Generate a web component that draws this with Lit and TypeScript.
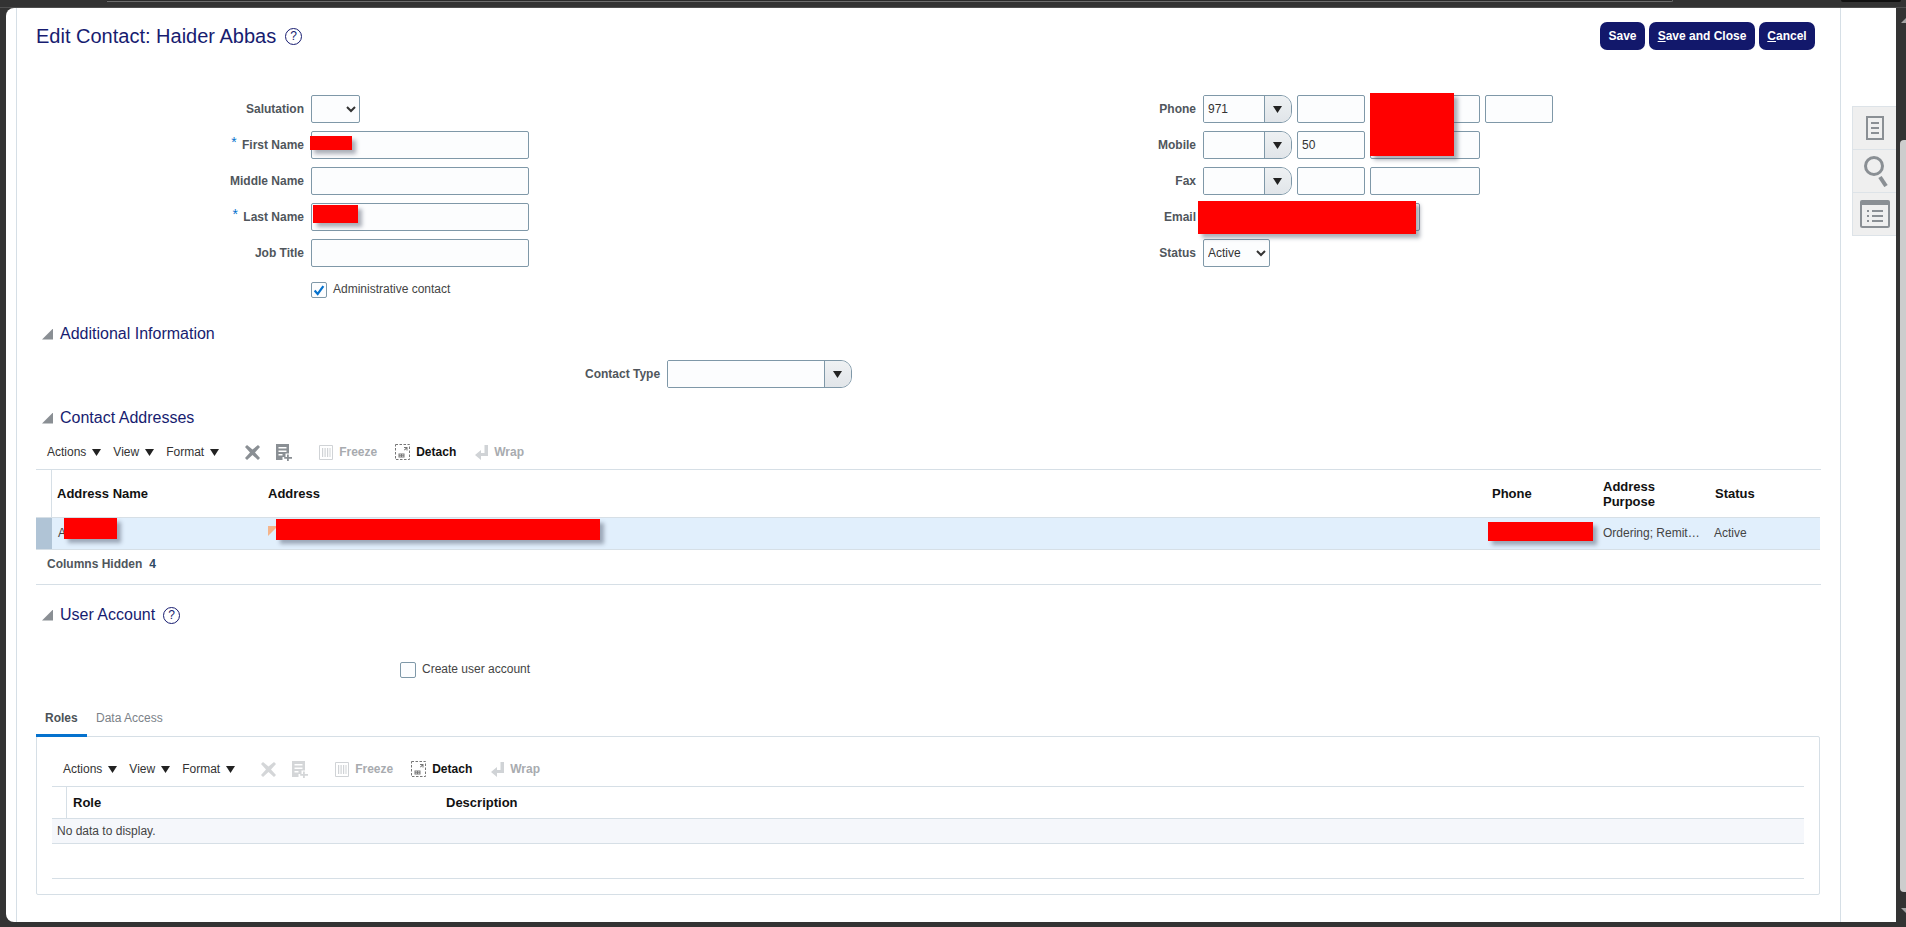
import { LitElement, css, html, svg } from 'lit'
import { customElement } from 'lit/decorators.js'

const arrowDown = html`<svg class="caret" viewBox="0 0 9 7"><path d="M0 0h9L4.500 7z" /></svg>`

const iconDelete = svg`<path d="M2 0l5.500 4.600L13 0l2 2-5 5.500L15 13l-2 2-5.500-5L2 15l-2-2 5-5.500L0 2z" />`
const iconAdd = svg`<path fill-rule="evenodd" d="M0 0h13v9.500H9.500V13H6.500v3H0zM2.500 3v1.500h8V3zm0 3.500V8h8V6.500zm0 3.500v1.500h4V10z" /><path d="M11 10.500h1.800V13H16v1.800h-3.200V17H11v-2.200H8.200V13H11z" />`
const iconFreeze = svg`<path fill="none" stroke="currentColor" d="M.5.5h13v14H.5z" /><path d="M3 3h1.200v9H3zM5.500 3h1.200v9H5.500zM8 3h1.200v9H8zM10.500 3h1v9h-1z" />`
const iconDetach = svg`<path fill="none" stroke="currentColor" stroke-dasharray="2.500 1.500" d="M.5.5h14v15H.5z" /><path d="M3.500 9.500h6v4h-6zm1 1v.8h1.500v-.8zm2.500 0v.8h1.500v-.8zm-2.500 1.700v.6h1.500v-.6zm2.500 0v.6h1.500v-.6z" fill-rule="evenodd" /><path d="M9 3h3.500v3.500h-1V4.700L9.700 6.500 9 5.800 10.800 4H9z" />`
const iconWrap = svg`<path d="M9.500 0H13v11H6v4L0 10l6-5v3h3.500z" />`

const toolbar = (disabled: boolean) => html`
  <div class="toolbar ${disabled ? 'muted' : ''}">
    <span class="menu">Actions ${arrowDown}</span>
    <span class="menu">View ${arrowDown}</span>
    <span class="menu format">Format ${arrowDown}</span>
    <svg class="ti del" viewBox="0 0 15 15">${iconDelete}</svg>
    <svg class="ti add" viewBox="0 0 16 17">${iconAdd}</svg>
    <svg class="ti freeze" viewBox="0 0 14 15">${iconFreeze}</svg>
    <span class="tb off first-off">Freeze</span>
    <svg class="ti detach" viewBox="0 0 15 16">${iconDetach}</svg>
    <span class="tb">Detach</span>
    <svg class="ti wrap" viewBox="0 0 13 15">${iconWrap}</svg>
    <span class="tb off">Wrap</span>
  </div>
`

const sectionHead = (title: string, help = false) => html`
  <div class="section">
    <span class="tri"></span>
    <h2>${title}</h2>
    ${help ? html`<span class="help small">?</span>` : ''}
  </div>
`

const combo = (value: string) => html`
  <span class="combo">
    <input .value=${value} />
    <span class="combo-btn"><svg class="caret" viewBox="0 0 9 7"><path d="M0 0h9L4.500 7z" /></svg></span>
  </span>
`

@customElement('app-root')
export class AppRoot extends LitElement {
  protected render() {
    return html`
      <div class="shell">
        <div class="topbar"><span class="tabstrip"></span><span class="blackbit"></span></div>
        <div class="body">
          <div class="win">
            <main class="main">
              <header class="head">
                <div class="title">
                  <h1>Edit Contact: Haider Abbas</h1>
                  <span class="help">?</span>
                </div>
                <div class="actions">
                  <button class="b-save">Save</button>
                  <button class="b-close"><u>S</u>ave and Close</button>
                  <button class="b-cancel"><u>C</u>ancel</button>
                </div>
              </header>

              <div class="form">
                <div class="fields left">
                  <label>Salutation</label>
                  <div><select class="sel salutation"><option></option></select></div>
                  <label><span class="req">*</span> First Name</label>
                  <input class="wide" />
                  <label>Middle Name</label>
                  <input class="wide" />
                  <label><span class="req">*</span> Last Name</label>
                  <input class="wide" />
                  <label>Job Title</label>
                  <input class="wide" />
                  <span></span>
                  <div class="check first">
                    <span class="box">
                      <svg viewBox="0 0 16 16"><path d="M3 8.500l3.500 4L13 3.500" fill="none" stroke="#0572ce" stroke-width="2.500" /></svg>
                    </span>
                    <span class="check-text">Administrative contact</span>
                  </div>
                </div>
                <div class="fields right">
                  <label>Phone</label>
                  <div class="line">${combo('971')}<input class="w68" /><input class="w110" /><input class="w68" /></div>
                  <label>Mobile</label>
                  <div class="line">${combo('')}<input class="w68" .value=${'50'} /><input class="w110" /></div>
                  <label>Fax</label>
                  <div class="line">${combo('')}<input class="w68" /><input class="w110" /></div>
                  <label>Email</label>
                  <input class="email" />
                  <label>Status</label>
                  <div><select class="sel status"><option>Active</option></select></div>
                </div>
              </div>

              <div class="gap-info">${sectionHead('Additional Information')}</div>
              <div class="type-row">
                <label>Contact Type</label>
                <span class="combo type">
                  <input />
                  <span class="combo-btn"><svg class="caret" viewBox="0 0 9 7"><path d="M0 0h9L4.500 7z" /></svg></span>
                </span>
              </div>

              <div class="gap-addr">${sectionHead('Contact Addresses')}</div>
              <div class="wrap-box">
                ${toolbar(false)}
                <div class="grid">
                  <div class="th sel-h"></div>
                  <div class="th p5">Address Name</div>
                  <div class="th">Address</div>
                  <div class="th p5">Phone</div>
                  <div class="th">Address<br />Purpose</div>
                  <div class="th p7">Status</div>
                  <div class="td sel-c"></div>
                  <div class="td p5">A</div>
                  <div class="td note"><span class="flag"></span></div>
                  <div class="td p5"></div>
                  <div class="td">Ordering; Remit…</div>
                  <div class="td">Active</div>
                </div>
                <div class="hidden-cols">Columns Hidden <b>4</b></div>
              </div>

              <div class="gap-user">${sectionHead('User Account', true)}</div>
              <div class="check create"><span class="box"></span><span class="check-text">Create user account</span></div>

              <div class="tabs">
                <span class="tab active">Roles</span>
                <span class="tab">Data Access</span>
              </div>
              <section class="panel">
                ${toolbar(true)}
                <div class="roles-head">
                  <div class="sel-r"></div>
                  <div class="role">Role</div>
                  <div>Description</div>
                </div>
                <div class="empty">No data to display.</div>
                <div class="filler"></div>
              </section>
            </main>

            <aside class="rail">
              <div class="rail-tab">
                <svg width="18" height="24" viewBox="0 0 18 24" fill="none" stroke="#8a8f94" stroke-width="2">
                  <path d="M1 1h16v22H1zM5 7h8M5 12h8M5 17h8" />
                </svg>
              </div>
              <div class="rail-tab">
                <svg width="26" height="32" viewBox="0 0 26 32" fill="none" stroke="#8a8f94">
                  <circle cx="12" cy="11" r="8.500" stroke-width="3" />
                  <path d="M18 22l6 9" stroke-width="4" />
                </svg>
              </div>
              <div class="rail-tab">
                <svg width="30" height="28" viewBox="0 0 30 28" fill="none">
                  <path d="M2 0h26a2 2 0 0 1 2 2v3H0V2a2 2 0 0 1 2-2z" fill="#8a8f94" />
                  <path d="M1 4h28v21.500a1.500 1.500 0 0 1-1.500 1.500h-25A1.500 1.500 0 0 1 1 25.500zM7 11h2M12 11h11M7 16h2M12 16h11M7 21h2M12 21h11" stroke="#8a8f94" stroke-width="2" />
                </svg>
              </div>
            </aside>
          </div>
          <div class="scroll">
            <span class="up"></span>
            <span class="thumb"></span>
            <span class="down"></span>
          </div>
        </div>

        <span class="red r-first"></span>
        <span class="red r-last"></span>
        <span class="red r-phone"></span>
        <span class="red r-email"></span>
        <span class="red r-name"></span>
        <span class="red r-addr"></span>
        <span class="red r-tel"></span>
      </div>
    `
  }

  static styles = css`
    :host {
      display: block;
      font-family: 'Liberation Sans', Arial, sans-serif;
      font-size: 12px;
      color: #333;
    }

    * {
      box-sizing: border-box;
    }

    .shell {
      position: relative;
      width: 1906px;
      height: 927px;
      background: #333;
      overflow: hidden;
      display: flex;
      flex-direction: column;
    }

    .topbar {
      height: 8px;
      display: flex;
      flex: none;
      border-bottom: 1px solid #4f4f4f;
    }

    .tabstrip {
      margin-left: 107px;
      width: 1566px;
      height: 2px;
      background: #2b2b2b;
      border-bottom: 1px solid #6d6d6d;
      border-right: 1px solid #6d6d6d;
      border-bottom-right-radius: 3px;
    }

    .blackbit {
      margin-left: 168px;
      width: 60px;
      height: 2px;
      background: #111;
      border-radius: 0 0 4px 4px;
    }

    .body {
      height: 914px;
      flex: none;
      display: flex;
    }

    .win {
      margin-left: 6px;
      width: 1890px;
      background: #fff;
      display: flex;
      padding-left: 10px;
      border-radius: 8px 0 0 8px;
    }

    .main {
      width: 1825px;
      border-left: 1px solid #d6dfe6;
      border-right: 1px solid #d6dfe6;
      display: flex;
      flex-direction: column;
      flex: none;
    }

    .head {
      display: flex;
      justify-content: space-between;
      align-items: center;
      margin-top: 14px;
      height: 28px;
      padding: 0 25px 0 19px;
    }

    .title {
      display: flex;
      align-items: center;
      gap: 9px;
    }

    h1 {
      margin: 0;
      font-size: 20px;
      font-weight: normal;
      color: #171c70;
    }

    .help {
      width: 17px;
      height: 17px;
      border: 1.5px solid #171c70;
      border-radius: 50%;
      color: #171c70;
      font-size: 12px;
      line-height: 14px;
      text-align: center;
    }

    .actions {
      display: flex;
      gap: 4px;
    }

    button {
      height: 28px;
      padding: 0;
      border: none;
      border-radius: 7px;
      background: #12186b;
      color: #fff;
      font: bold 12px 'Liberation Sans', Arial, sans-serif;
    }

    .b-save {
      width: 45px;
    }

    .b-close {
      width: 106px;
    }

    .b-cancel {
      width: 56px;
    }

    .form {
      display: flex;
      margin-top: 45px;
      height: 203px;
    }

    .fields {
      display: grid;
      grid-auto-rows: 28px;
      row-gap: 8px;
      align-items: center;
    }

    .left {
      width: 1129px;
      grid-template-columns: 287px auto;
      column-gap: 7px;
      justify-content: start;
      grid-template-rows: repeat(5, 28px) 23px;
    }

    .right {
      grid-template-columns: 50px auto;
      column-gap: 7px;
      justify-content: start;
    }

    label {
      text-align: right;
      font-weight: bold;
      color: #50565c;
      white-space: nowrap;
    }

    .req {
      color: #0572ce;
      font-weight: normal;
      font-size: 14px;
      line-height: 0;
      vertical-align: 2px;
      margin-right: 2px;
    }

    input {
      height: 28px;
      border: 1px solid #7f98a8;
      border-radius: 2px;
      background: #fcfdfe;
      font: 12px 'Liberation Sans', Arial, sans-serif;
      color: #333;
      padding: 0 4px;
      outline: none;
      display: block;
    }

    .wide {
      width: 218px;
    }

    .w68 {
      width: 68px;
    }

    .w110 {
      width: 110px;
    }

    .email {
      width: 217px;
    }

    .line {
      display: flex;
      gap: 5px;
    }

    .sel {
      height: 28px;
      border: 1px solid #7f98a8;
      border-radius: 2px;
      background: #fcfdfe;
      font: 12px 'Liberation Sans', Arial, sans-serif;
      color: #333;
      display: block;
    }

    .salutation {
      width: 49px;
    }

    .status {
      width: 67px;
    }

    .combo {
      display: flex;
      width: 89px;
      height: 28px;
      border: 1px solid #7f98a8;
      border-radius: 2px 11px 11px 2px;
      overflow: hidden;
      background: #fcfdfe;
    }

    .combo input {
      flex: 1;
      width: 0;
      height: 26px;
      border: none;
      border-radius: 0;
    }

    .combo-btn {
      width: 27px;
      flex: none;
      display: flex;
      align-items: center;
      justify-content: center;
      padding-right: 2px;
      background: linear-gradient(#eef1f3, #e1e5e9);
      border-left: 1px solid #7f98a8;
    }

    .combo.type {
      width: 185px;
    }

    .check {
      display: flex;
      align-items: center;
      gap: 6px;
      color: #444;
    }

    .check.first {
      align-self: end;
      height: 16px;
    }

    .check-text {
      padding-bottom: 2px;
    }

    .box {
      width: 16px;
      height: 16px;
      border: 1px solid #7f98a8;
      border-radius: 2px;
      background: #fcfdfe;
      display: block;
    }

    .box svg {
      display: block;
      width: 14px;
      height: 14px;
    }

    .gap-info {
      margin-top: 26px;
    }

    .gap-addr {
      margin-top: 20px;
    }

    .gap-user {
      margin-top: 20px;
    }

    .section {
      display: flex;
      align-items: center;
      height: 20px;
      padding-left: 25px;
    }

    .tri {
      width: 11px;
      height: 11px;
      background: #8a8f94;
      clip-path: polygon(100% 0, 100% 100%, 0 100%);
      margin-right: 7px;
    }

    h2 {
      margin: 0;
      font-size: 16px;
      font-weight: normal;
      color: #171c70;
    }

    .help.small {
      margin-left: 8px;
    }

    .type-row {
      display: flex;
      align-items: center;
      gap: 7px;
      margin-top: 16px;
      height: 28px;
      padding-left: 568px;
    }

    .wrap-box {
      margin: 0 19px;
    }

    .toolbar {
      margin-top: 10px;
      height: 28px;
      margin-bottom: 3px;
      padding-left: 11px;
      display: flex;
      align-items: center;
      color: #333;
    }

    .panel .toolbar {
      margin-top: 11px;
    }

    .menu {
      display: flex;
      align-items: center;
      gap: 6px;
      margin-right: 12px;
    }

    .menu.format {
      margin-right: 26px;
    }

    .caret {
      width: 9px;
      height: 7px;
      fill: #222;
      display: block;
    }

    .ti {
      display: block;
      flex: none;
      fill: currentColor;
    }

    .del {
      width: 15px;
      height: 15px;
      color: #8a8f94;
      margin-right: 16px;
    }

    .add {
      width: 16px;
      height: 17px;
      color: #8a8f94;
      margin-right: 27px;
    }

    .freeze {
      width: 14px;
      height: 15px;
      color: #d0d3d6;
      margin-right: 6px;
    }

    .detach {
      width: 15px;
      height: 16px;
      color: #777;
      margin-right: 6px;
    }

    .wrap {
      width: 13px;
      height: 15px;
      color: #d0d3d6;
      margin-right: 6px;
    }

    .tb {
      font-weight: bold;
      color: #111;
      margin-right: 19px;
    }

    .tb.off {
      color: #a8abaf;
    }

    .tb.first-off {
      margin-right: 18px;
    }

    .muted .del,
    .muted .add {
      color: #d4d6d8;
    }

    .grid {
      display: grid;
      grid-template-columns: 16px 210px 1225px 110px 111px 112px;
      grid-template-rows: 48px 32px;
      border-top: 1px solid #d6dfe6;
    }

    .th {
      font-size: 13px;
      line-height: 15px;
      font-weight: bold;
      color: #111;
      padding-left: 6px;
      display: flex;
      align-items: center;
      border-bottom: 1px solid #d6dfe6;
    }

    .sel-h {
      border-right: 1px solid #d6dfe6;
    }

    .p5 {
      padding-left: 5px;
    }

    .p7 {
      padding-left: 7px;
    }

    .td {
      background: #e1effc;
      padding: 0 0 2px 6px;
      display: flex;
      align-items: center;
      border-bottom: 1px solid #d6dfe6;
      color: #444;
    }

    .sel-c {
      background: #b0c4d6;
    }

    .note {
      position: relative;
    }

    .flag {
      position: absolute;
      left: 6px;
      top: 8px;
      width: 10px;
      height: 10px;
      background: #f5b48a;
      clip-path: polygon(0 0, 100% 0, 0 100%);
    }

    .hidden-cols {
      height: 35px;
      padding: 0 0 7px 11px;
      display: flex;
      align-items: center;
      gap: 7px;
      font-weight: bold;
      color: #50565c;
      border-bottom: 1px solid #d6dfe6;
    }

    .hidden-cols b {
      color: #2e4a63;
    }

    .create {
      margin: 37px 0 0 383px;
      height: 16px;
    }

    .tabs {
      display: flex;
      margin: 23px 0 0 19px;
      height: 36px;
    }

    .tab {
      padding: 0 9px;
      height: 36px;
      line-height: 34px;
      color: #7b8288;
      margin-right: 0;
      border-bottom: 3px solid transparent;
    }

    .tab.active {
      width: 51px;
      color: #4c5257;
      font-weight: bold;
      border-bottom-color: #0572ce;
      position: relative;
      z-index: 1;
    }

    .panel {
      margin: -1px 19px 0;
      width: 1784px;
      height: 159px;
      border: 1px solid #d6dfe6;
      border-radius: 2px;
      padding: 7px 15px 0;
    }

    .roles-head {
      display: grid;
      grid-template-columns: 15px 379px 1fr;
      height: 33px;
      align-items: center;
      font-size: 13px;
      font-weight: bold;
      color: #111;
      border-top: 1px solid #d6dfe6;
      border-bottom: 1px solid #d6dfe6;
    }

    .sel-r {
      height: 100%;
      border-right: 1px solid #d6dfe6;
    }

    .role {
      padding-left: 6px;
    }

    .empty {
      height: 25px;
      line-height: 24px;
      padding-left: 5px;
      background: #f5f7fb;
      border-bottom: 1px solid #d6dfe6;
      color: #444;
    }

    .filler {
      height: 35px;
      border-bottom: 1px solid #d6dfe6;
    }

    .rail {
      flex: 1;
      padding: 98px 0 0 11px;
      display: flex;
      flex-direction: column;
    }

    .rail-tab {
      width: 44px;
      height: 44px;
      background: #efefef;
      border: 1px solid #dde3e8;
      border-right: none;
      margin-bottom: -1px;
      display: flex;
      align-items: center;
      justify-content: center;
    }

    .scroll {
      width: 10px;
      position: relative;
      display: flex;
      flex-direction: column;
      align-items: flex-end;
    }

    .up,
    .down {
      width: 5px;
      height: 5px;
      background: #a3a3a3;
      margin-top: 10px;
    }

    .up {
      clip-path: polygon(100% 0, 100% 100%, 0 100%);
    }

    .down {
      margin-top: 16px;
      clip-path: polygon(0 0, 100% 0, 100% 100%);
    }

    .thumb {
      margin-top: 117px;
      width: 6px;
      height: 752px;
      background: #cdcdcd;
      border-radius: 4px 0 0 4px;
    }

    .red {
      position: absolute;
      background: #f00;
      box-shadow: 4px 4px 4px rgba(70, 80, 100, 0.45);
    }

    .r-first {
      left: 310px;
      top: 136px;
      width: 42px;
      height: 14px;
    }

    .r-last {
      left: 313px;
      top: 205px;
      width: 45px;
      height: 18px;
    }

    .r-phone {
      left: 1370px;
      top: 93px;
      width: 84px;
      height: 63px;
    }

    .r-email {
      left: 1198px;
      top: 201px;
      width: 218px;
      height: 33px;
    }

    .r-name {
      left: 64px;
      top: 518px;
      width: 53px;
      height: 21px;
    }

    .r-addr {
      left: 276px;
      top: 519px;
      width: 324px;
      height: 21px;
    }

    .r-tel {
      left: 1488px;
      top: 522px;
      width: 105px;
      height: 19px;
    }
  `
}

declare global {
  interface HTMLElementTagNameMap {
    'app-root': AppRoot
  }
}
